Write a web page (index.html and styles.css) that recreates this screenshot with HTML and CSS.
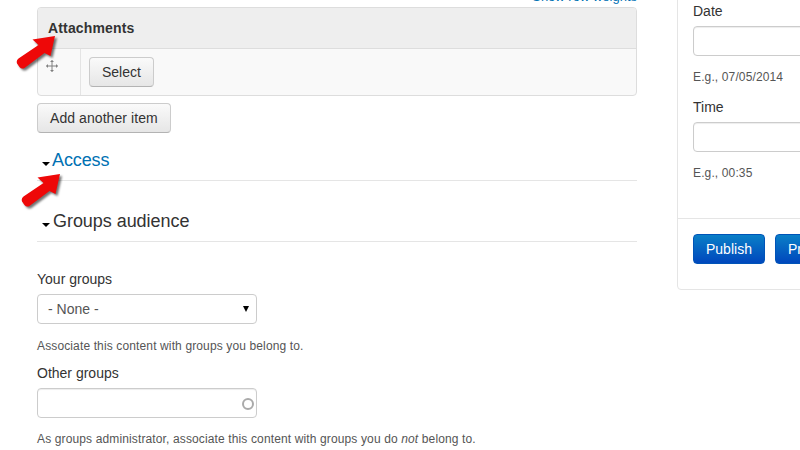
FILE: index.html
```html
<!DOCTYPE html>
<html lang="en">
<head>
<meta charset="utf-8">
<title>Attachments</title>
<link rel="stylesheet" href="styles.css">
</head>
<body>
<div class="page">
  <main class="main">
    <div class="weights"><a href="#">Show row weights</a></div>
    <div class="table">
      <div class="table-head">Attachments</div>
      <div class="table-row">
        <div class="handle">
          <svg width="12" height="12" viewBox="0 0 12 12" class="move"><path d="M6 .5v11M.5 6h11" stroke="#808080" fill="none"/><path d="M6 0l2 2H4zM6 12l2-2H4zM0 6l2-2v4zM12 6l-2-2v4z" fill="#808080"/></svg>
        </div>
        <div class="cell"><button class="btn">Select</button></div>
      </div>
    </div>
    <button class="btn add">Add another item</button>
    <h2 class="section access"><span class="caret"></span><a href="#">Access</a></h2>
    <h2 class="section groups"><span class="caret"></span>Groups audience</h2>
    <label class="label first">Your groups</label>
    <div class="field select">- None -<span class="select-arrow"></span></div>
    <p class="help">Associate this content with groups you belong to.</p>
    <label class="label">Other groups</label>
    <div class="field auto"><span class="throbber"></span></div>
    <p class="help last">As groups administrator, associate this content with groups you do <em>not</em> belong to.</p>
  </main>
  <aside class="side">
    <div class="side-body">
      <label class="label">Date</label>
      <div class="field wide"></div>
      <p class="help hint">E.g., 07/05/2014</p>
      <label class="label time">Time</label>
      <div class="field wide"></div>
      <p class="help hint">E.g., 00:35</p>
    </div>
    <div class="actions">
      <button class="btn primary">Publish</button>
      <button class="btn primary">Preview</button>
    </div>
  </aside>
</div>
<svg class="arrow arrow-one" width="40" height="36" viewBox="0 0 40 36"><use href="#red-arrow"/></svg>
<svg class="arrow arrow-two" width="40" height="36" viewBox="0 0 40 36"><use href="#red-arrow"/></svg>
<svg width="0" height="0" class="defs"><defs>
  <path id="red-arrow" d="M39 2 L34.500 22 L28.500 19 L8.500 34 Q5.500 35.500 3.500 33 L1 29.500 Q0 26.500 2.500 24.500 L22.500 11 L16.500 5.500Z" fill="#ee0808"/>
</defs></svg>
</body>
</html>
```
FILE: styles.css
```css
* { box-sizing: border-box; }
html, body { margin: 0; height: 100%; }
body {
  width: 800px;
  height: 450px;
  overflow: hidden;
  position: relative;
  background: #fff;
  color: #333;
  font-family: "Liberation Sans", Arial, sans-serif;
  font-size: 14px;
  line-height: 20px;
}
a { color: #0071b3; text-decoration: none; }
.page {
  display: flex;
  align-items: flex-start;
  gap: 40px;
  margin-top: -13px;
  padding-left: 37px;
  width: 1000px;
}
.main { width: 600px; flex: none; }
.weights { height: 20px; text-align: right; font-size: 13px; line-height: 20px; }
.table {
  border: 1px solid #ddd;
  border-radius: 4px;
  background: #f9f9f9;
  overflow: hidden;
}
.table-head {
  height: 41px;
  background: #eee;
  border-bottom: 1px solid #ddd;
  padding: 10px;
  font-weight: 700;
  line-height: 20px;
  letter-spacing: .15px;
  color: #333;
}
.table-row { display: flex; height: 46px; }
.handle { width: 43px; border-right: 1px solid #e4e4e4; padding: 11px 0 0 8px; }
.move { display: block; }
.cell { padding: 8px; }
.btn {
  display: block;
  height: 30px;
  padding: 0 12px;
  border: 1px solid #ccc;
  border-bottom-color: #b3b3b3;
  border-radius: 4px;
  background: linear-gradient(#fafafa, #e6e6e6);
  color: #333;
  font: 14px/20px "Liberation Sans", Arial, sans-serif;
}
.add { margin-top: 7px; letter-spacing: .07px; }
.section {
  margin: 0;
  font-weight: 400;
  font-size: 18px;
  border-bottom: 1px solid #e5e5e5;
  display: flex;
  align-items: baseline;
}
.access { margin-top: 14px; height: 34px; line-height: 26px; letter-spacing: -.12px; }
.groups { margin-top: 26px; height: 35px; padding-top: 1px; line-height: 26px; letter-spacing: -.05px; }
.caret {
  width: 0;
  height: 0;
  margin: 0 3px 0 5px;
  border: 4px solid transparent;
  border-top-color: #000;
  border-bottom-width: 0;
}
.access .caret { margin-right: 2px; }
.label { display: block; line-height: 20px; }
.label.first { margin-top: 27px; }
.field {
  height: 30px;
  margin-top: 5px;
  border: 1px solid #ccc;
  border-radius: 4px;
  background: #fff;
  box-shadow: inset 0 1px 1px rgba(0,0,0,.075);
}
.select {
  width: 220px;
  padding: 4px 10px;
  position: relative;
  color: #555;
  box-shadow: none;
}
.select-arrow {
  position: absolute;
  right: 7px;
  top: 11px;
  width: 0;
  height: 0;
  border: 3px solid transparent;
  border-top: 6px solid #000;
  border-bottom: 0;
}
.auto { width: 220px; position: relative; }
.throbber {
  position: absolute;
  right: 2px;
  top: 9px;
  width: 12px;
  height: 12px;
  border: 2px solid #aaa;
  border-radius: 50%;
}
.help { margin: 13px 0 0; font-size: 12px; line-height: 18px; color: #555; letter-spacing: .13px; }
.help.last { margin-top: 12px; }
.main .help + .label { margin-top: 8px; }
.side {
  width: 300px;
  flex: none;
  border: 1px solid #e5e5e5;
  border-radius: 4px;
  margin-top: -20px;
}
.side-body { padding: 33px 15px 36px; border-bottom: 1px solid #e5e5e5; }
.wide { width: 260px; }
.help.hint { margin-top: 12px; }
.label.time { margin-top: 11px; }
.actions { display: flex; gap: 10px; padding: 15px 15px 25px; }
.primary {
  color: #fff;
  border: 1px solid #0054b8;
  background: linear-gradient(#0a7fc7, #0047bd);
}
.arrow { position: absolute; overflow: visible; filter: drop-shadow(2px 2px 1px rgba(0,0,0,.55)); }
.arrow-one { left: 16px; top: 34px; }
.arrow-two { left: 21px; top: 172px; }
.defs { position: absolute; }
```
